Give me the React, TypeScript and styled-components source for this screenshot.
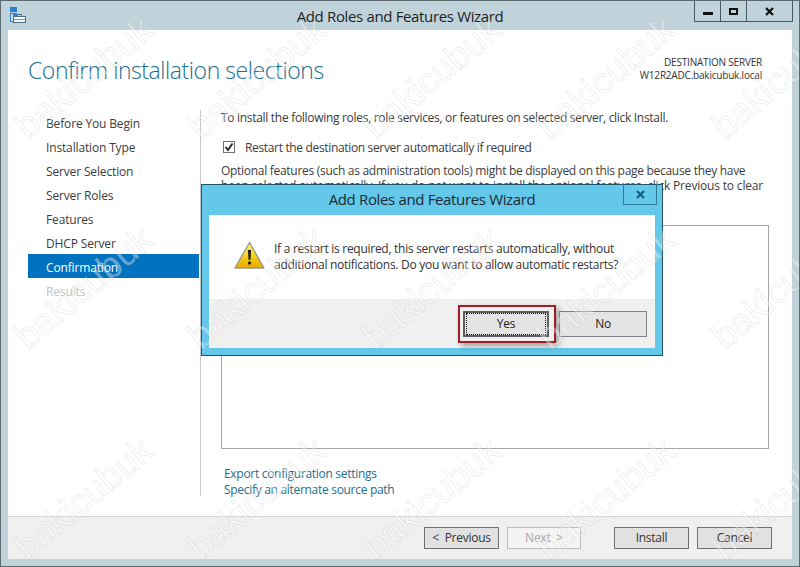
import styled, { createGlobalStyle } from 'styled-components';

const GlobalStyle = createGlobalStyle`
  html, body {
    margin: 0;
    padding: 0;
    background: #c0d3da;
  }
  * {
    box-sizing: border-box;
  }
`;

const FONT = `'Open Sans', 'Noto Sans', sans-serif`;

const Frame = styled.div`
  position: relative;
  display: flex;
  flex-direction: column;
  width: 800px;
  height: 567px;
  overflow: hidden;
  background: #c0d3da;
  border: 1px solid #5c6a72;
  font-family: ${FONT};
  font-size: 12px;
  letter-spacing: -0.3px;
  color: #3c3c3c;
`;

const TitleBar = styled.div`
  position: relative;
  display: flex;
  flex: none;
  align-items: flex-start;
  justify-content: flex-end;
  height: 29px;
  padding-right: 6px;
`;

const AppIcon = styled.svg`
  position: absolute;
  left: 9px;
  top: 6px;
`;

const WindowTitle = styled.div`
  position: absolute;
  left: 0;
  right: 0;
  top: 5px;
  text-align: center;
  font-size: 15px;
  line-height: 20px;
  letter-spacing: -0.35px;
  color: #1e1e1e;
`;

const Controls = styled.div`
  display: flex;
  height: 21px;
  border: 1px solid #4a5a63;
  border-top: 0;
`;

const ControlButton = styled.div<{ $width: number }>`
  display: flex;
  align-items: center;
  justify-content: center;
  width: ${({ $width }) => $width}px;
  & + & {
    border-left: 1px solid #4a5a63;
  }
`;

const Client = styled.div`
  display: flex;
  flex: 1;
  flex-direction: column;
  margin: 0 7px 7px;
  background: #fff;
`;

const Header = styled.div`
  display: flex;
  flex: none;
  justify-content: space-between;
  height: 80px;
  padding: 24px 30px 0 20px;
`;

const Heading = styled.h1`
  margin: 0;
  font-size: 23px;
  font-weight: 300;
  line-height: 33px;
  letter-spacing: -0.44px;
  color: #1b6f90;
`;

const ServerInfo = styled.div`
  padding-top: 2px;
  text-align: right;
  font-size: 10px;
  line-height: 13px;
  letter-spacing: -0.2px;
  color: #333;
`;

const Body = styled.div`
  display: flex;
  flex: none;
  height: 386px;
`;

const Sidebar = styled.nav`
  flex: none;
  width: 193px;
  padding: 0 1px 0 20px;
  border-right: 1px solid #c8c8c8;
`;

const StepItem = styled.div<{ $active?: boolean; $disabled?: boolean }>`
  height: 24px;
  padding-left: 18px;
  line-height: 28px;
  letter-spacing: -0.15px;
  background: ${({ $active }) => ($active ? '#0072c0' : 'transparent')};
  color: ${({ $active, $disabled }) => ($active ? '#fff' : $disabled ? '#c4c4c4' : '#3c3c3c')};
`;

const Main = styled.div`
  display: flex;
  flex: 1;
  flex-direction: column;
  padding: 0 23px 0 20px;
`;

const Paragraph = styled.p<{ $spacing?: number }>`
  margin: 0;
  line-height: 15px;
  letter-spacing: ${({ $spacing }) => $spacing ?? -0.3}px;
`;

const CheckRow = styled.div`
  display: flex;
  align-items: center;
  gap: 10px;
  height: 16px;
  margin: 14px 0 8px 2px;
  letter-spacing: -0.34px;
`;

const CheckBox = styled.div`
  display: flex;
  align-items: center;
  justify-content: center;
  width: 12px;
  height: 12px;
  border: 1px solid #707070;
  background: #fff;
`;

const ListPanel = styled.div`
  flex: none;
  height: 224px;
  margin-top: 32px;
  border: 1px solid #a8a8a8;
  background: #fff;
`;

const Links = styled.div`
  display: flex;
  flex-direction: column;
  margin: 17px 0 0 3px;
`;

const LinkText = styled.a`
  line-height: 16px;
  color: #1c6f8d;
`;

const Footer = styled.div`
  display: flex;
  flex: none;
  align-items: flex-start;
  justify-content: flex-end;
  height: 43px;
  margin-top: 20px;
  padding: 10px 20px 0 0;
  border-top: 1px solid #d4d4d4;
  background: #f0f0f0;
`;

const WizardButton = styled.div<{ $disabled?: boolean; $gap?: number; $width?: number }>`
  width: ${({ $width }) => $width ?? 75}px;
  height: 22px;
  margin-left: ${({ $gap }) => $gap ?? 8}px;
  border: 1px solid ${({ $disabled }) => ($disabled ? '#bcbcbc' : '#707070')};
  background: ${({ $disabled }) => ($disabled ? '#f4f4f4' : '#e1e1e1')};
  color: ${({ $disabled }) => ($disabled ? '#a6a6a6' : '#333')};
  text-align: center;
  line-height: 20px;
  letter-spacing: -0.25px;
  word-spacing: 3px;
`;

const Dialog = styled.div`
  position: absolute;
  left: 200px;
  top: 183px;
  display: flex;
  flex-direction: column;
  width: 462px;
  height: 172px;
  padding: 0 7px 7px;
  border: 1px solid #20546a;
  background: #63c8ea;
`;

const DialogTitleBar = styled.div`
  position: relative;
  flex: none;
  height: 30px;
  text-align: center;
  font-size: 15px;
  line-height: 28px;
  letter-spacing: -0.35px;
  color: #1b2a33;
`;

const DialogClose = styled.div`
  position: absolute;
  right: -2px;
  top: -1px;
  display: flex;
  align-items: center;
  justify-content: center;
  width: 34px;
  height: 21px;
  border: 1px solid #2f7a98;
  border-top: 0;
`;

const DialogBody = styled.div`
  display: flex;
  flex: 1;
  flex-direction: column;
  background: #fff;
`;

const Message = styled.div`
  display: flex;
  flex: 1;
  gap: 9px;
  padding: 26px 0 0 25px;
`;

const MessageText = styled.div`
  line-height: 16px;
  letter-spacing: -0.28px;
  color: #333;
`;

const DialogFooter = styled.div`
  display: flex;
  flex: none;
  justify-content: flex-end;
  height: 49px;
  padding: 12px 8px 0 0;
  background: #f0f0f0;
`;

const DialogButton = styled.div<{ $default?: boolean }>`
  position: relative;
  display: flex;
  align-items: center;
  justify-content: center;
  width: ${({ $default }) => ($default ? '86px' : '88px')};
  height: 26px;
  padding-bottom: ${({ $default }) => ($default ? '0' : '2px')};
  margin-left: ${({ $default }) => ($default ? '0' : '10px')};
  border: ${({ $default }) => ($default ? '2px solid #5e5e5e' : '1px solid #808080')};
  background: #e4e4e4;
  color: #222;
`;

const FocusRing = styled.div`
  display: flex;
  align-items: center;
  justify-content: center;
  width: 100%;
  height: 100%;
  margin: 1px;
  padding-bottom: 2px;
  border: 1px dotted #111;
`;

const Highlight = styled.div`
  position: absolute;
  left: -7px;
  top: -8px;
  width: 98px;
  height: 38px;
  border: 2px solid #a31b24;
  box-shadow: 3px 3px 6px rgba(0, 0, 0, 0.35);
`;

const WatermarkText = styled.div<{ $x: number; $y: number }>`
  position: absolute;
  left: ${({ $x }) => $x - 101}px;
  top: ${({ $y }) => $y - 26}px;
  width: 200px;
  height: 50px;
  transform: rotate(-40deg);
  text-align: center;
  pointer-events: none;
  font-family: 'Liberation Sans', sans-serif;
  font-size: 37px;
  line-height: 50px;
  letter-spacing: 0;
  color: rgba(255, 255, 255, 0.38);
  -webkit-text-stroke: 1px rgba(130, 130, 130, 0.14);
`;

const steps = [
  'Before You Begin',
  'Installation Type',
  'Server Selection',
  'Server Roles',
  'Features',
  'DHCP Server',
  'Confirmation',
  'Results',
];

const watermarks = [78, 288, 499].flatMap((y) =>
  [84, 257, 432, 606, 781].map((x) => ({ x, y })),
);

const WarningIcon = () => (
  <svg width="31" height="29" viewBox="0 0 31 29">
    <defs>
      <linearGradient id="warn" x1="0" y1="0" x2="0" y2="1">
        <stop offset="0" stopColor="#fff27a" />
        <stop offset="0.55" stopColor="#f7cf16" />
        <stop offset="1" stopColor="#e5a800" />
      </linearGradient>
    </defs>
    <path d="M15.5 1.5 L30 27 H1 Z" fill="url(#warn)" stroke="#9a9a88" strokeWidth="1.4" strokeLinejoin="round" />
    <path d="M13.9 9 H17.1 L16.4 19 H14.6 Z" fill="#1c1c1c" />
    <rect x="14" y="20.5" width="3" height="3" rx="1" fill="#1c1c1c" />
  </svg>
);

const ServerManagerIcon = () => (
  <AppIcon width="18" height="17" viewBox="0 0 18 17">
    <rect x="0" y="0" width="7" height="5" fill="#2a82d8" />
    <rect x="0" y="6" width="7" height="9" fill="#2a82d8" />
    <rect x="1" y="7" width="2" height="7" fill="#cfe4f6" />
    <rect x="3.5" y="9.5" width="12" height="6" fill="#f2f6f9" stroke="#4f6f88" />
    <path d="M7.5 9.5 V7.5 H11.5 V9.5" fill="none" stroke="#4f6f88" />
    <path d="M4 12.5 H15" stroke="#7f97a8" />
  </AppIcon>
);

const CloseGlyph = ({ color }: { color: string }) => (
  <svg width="9" height="9" viewBox="0 0 9 9">
    <path d="M1 1 L8 8 M8 1 L1 8" stroke={color} strokeWidth="2.2" />
  </svg>
);

export default function App() {
  return (
    <>
      <GlobalStyle />
      <Frame>
        <TitleBar>
          <ServerManagerIcon />
          <WindowTitle>Add Roles and Features Wizard</WindowTitle>
          <Controls>
            <ControlButton $width={25}>
              <svg width="10" height="10" viewBox="0 0 10 10">
                <rect x="0" y="6" width="10" height="3" fill="#111" />
              </svg>
            </ControlButton>
            <ControlButton $width={26}>
              <svg width="9" height="7" viewBox="0 0 9 7">
                <rect x="1" y="1" width="7" height="5" fill="none" stroke="#111" strokeWidth="2" />
              </svg>
            </ControlButton>
            <ControlButton $width={46}>
              <CloseGlyph color="#111" />
            </ControlButton>
          </Controls>
        </TitleBar>
        <Client>
          <Header>
            <Heading>Confirm installation selections</Heading>
            <ServerInfo>
              DESTINATION SERVER
              <br />
              W12R2ADC.bakicubuk.local
            </ServerInfo>
          </Header>
          <Body>
            <Sidebar>
              {steps.map((step) => (
                <StepItem key={step} $active={step === 'Confirmation'} $disabled={step === 'Results'}>
                  {step}
                </StepItem>
              ))}
            </Sidebar>
            <Main>
              <Paragraph>
                To install the following roles, role services, or features on selected server, click Install.
              </Paragraph>
              <CheckRow>
                <CheckBox>
                  <svg width="10" height="10" viewBox="0 0 10 10">
                    <path d="M1.5 5 L4 8 L8.5 1.5" fill="none" stroke="#222" strokeWidth="1.8" />
                  </svg>
                </CheckBox>
                Restart the destination server automatically if required
              </CheckRow>
              <Paragraph $spacing={-0.29}>
                Optional features (such as administration tools) might be displayed on this page because they have
              </Paragraph>
              <Paragraph $spacing={-0.18}>
                been selected automatically. If you do not want to install the optional features, click Previous to clear
              </Paragraph>
              <ListPanel />
              <Links>
                <LinkText>Export configuration settings</LinkText>
                <LinkText>Specify an alternate source path</LinkText>
              </Links>
            </Main>
          </Body>
          <Footer>
            <WizardButton>&lt; Previous</WizardButton>
            <WizardButton $disabled $width={74}>Next &gt;</WizardButton>
            <WizardButton $gap={33}>Install</WizardButton>
            <WizardButton>Cancel</WizardButton>
          </Footer>
        </Client>
        <Dialog>
          <DialogTitleBar>
            Add Roles and Features Wizard
            <DialogClose>
              <CloseGlyph color="#1b5f7a" />
            </DialogClose>
          </DialogTitleBar>
          <DialogBody>
            <Message>
              <WarningIcon />
              <MessageText>
                If a restart is required, this server restarts automatically, without
                <br />
                additional notifications. Do you want to allow automatic restarts?
              </MessageText>
            </Message>
            <DialogFooter>
              <DialogButton $default>
                <FocusRing>Yes</FocusRing>
                <Highlight />
              </DialogButton>
              <DialogButton>No</DialogButton>
            </DialogFooter>
          </DialogBody>
        </Dialog>
        {watermarks.map(({ x, y }) => (
          <WatermarkText key={`${x}-${y}`} $x={x} $y={y}>
            bakicubuk
          </WatermarkText>
        ))}
      </Frame>
    </>
  );
}
